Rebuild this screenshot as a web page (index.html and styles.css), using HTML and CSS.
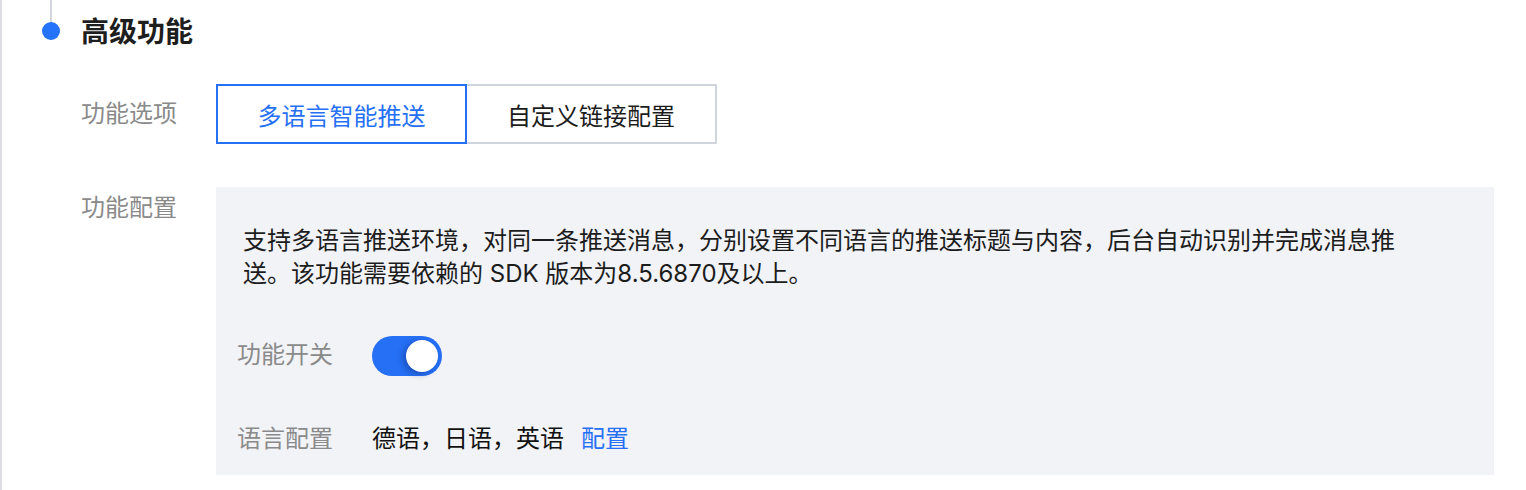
FILE: index.html
```html
<!DOCTYPE html>
<html lang="zh-CN">
<head>
<meta charset="utf-8">
<title>高级功能</title>
<link rel="stylesheet" href="styles.css">
</head>
<body>
<div class="page">
  <div class="section-head">
    <span class="marker"></span>
    <h2 class="section-title">高级功能</h2>
  </div>

  <div class="form-row row-options">
    <div class="form-label">功能选项</div>
    <div class="tabs">
      <button class="tab tab-active">多语言智能推送</button>
      <button class="tab">自定义链接配置</button>
    </div>
  </div>

  <div class="form-row row-config">
    <div class="form-label label-top">功能配置</div>
    <div class="panel">
      <p class="panel-desc">支持多语言推送环境，对同一条推送消息，分别设置不同语言的推送标题与内容，后台自动识别并完成消息推送。该功能需要依赖的 SDK 版本为8.5.6870及以上。</p>
      <div class="panel-row row-switch">
        <div class="panel-label">功能开关</div>
        <div class="switch switch-on"><span class="switch-knob"></span></div>
      </div>
      <div class="panel-row row-lang">
        <div class="panel-label">语言配置</div>
        <div class="panel-value">德语，日语，英语<a class="link" href="#">配置</a></div>
      </div>
    </div>
  </div>
</div>
</body>
</html>
```

FILE: styles.css
```css
* { box-sizing: border-box; }

html, body {
  margin: 0;
  padding: 0;
  background: #ffffff;
}

body {
  font-family: "Inter", "Noto Sans CJK SC", "Noto Sans", sans-serif;
  color: #1c1c1c;
  font-size: 24px;
}

.page {
  border-left: 2px solid #dcdde3;
  min-height: 490px;
  width: 1526px;
}

.section-head {
  display: flex;
  align-items: center;
  height: 64px;
  padding-left: 40px;
}

.marker {
  position: relative;
  width: 18px;
  height: 18px;
  border-radius: 50%;
  background: #2673fb;
  flex: none;
  margin-top: -2px;
}

.marker::before {
  content: "";
  position: absolute;
  left: 8px;
  bottom: 18px;
  width: 2px;
  height: 24px;
  background: #d4d6de;
}

.section-title {
  margin: 0 0 0 21px;
  font-size: 28px;
  font-weight: 700;
  color: #1e1e1e;
  line-height: 36px;
}

.form-row {
  display: flex;
  padding-left: 79px;
}

.row-options {
  margin-top: 20px;
  align-items: center;
}

.row-config {
  margin-top: 43px;
  align-items: flex-start;
}

.form-label {
  width: 135px;
  flex: none;
  color: #8a8a8a;
  font-size: 24px;
  line-height: 42px;
}

.label-top {
  margin-top: 0;
}

.tabs {
  display: flex;
}

.tab {
  font-family: inherit;
  font-size: 24px;
  width: 251px;
  height: 60px;
  background: #ffffff;
  border: 2px solid #cfd4dd;
  color: #1c1c1c;
  padding: 0;
  margin: 0;
  cursor: pointer;
}

.tab + .tab {
  border-left: none;
  width: 250px;
}

.tab-active {
  border-color: #2670f5;
  color: #2670f5;
}

.panel {
  width: 1278px;
  background: #f2f3f7;
  padding: 37px 21px 16px 21px;
}

.panel-desc {
  margin: 0;
  padding-left: 6px;
  max-width: 1166px;
  font-size: 24px;
  line-height: 33px;
  color: #1c1c1c;
}

.panel-row {
  display: flex;
  align-items: center;
  height: 40px;
}

.row-switch {
  margin-top: 46px;
}

.row-lang {
  margin-top: 43px;
}

.panel-label {
  width: 135px;
  flex: none;
  color: #8a8a8a;
  font-size: 24px;
  line-height: 36px;
}

.row-switch .panel-label {
  margin-top: -2px;
}

.panel-value {
  color: #111111;
  font-size: 24px;
  line-height: 36px;
}

.link {
  color: #2670f5;
  text-decoration: none;
  margin-left: 17px;
}

.switch {
  position: relative;
  width: 70px;
  height: 40px;
  border-radius: 20px;
  background: #2670f5;
}

.switch-knob {
  position: absolute;
  top: 4px;
  right: 4px;
  width: 32px;
  height: 32px;
  border-radius: 50%;
  background: #ffffff;
  box-shadow: -3px 2px 6px rgba(10, 40, 120, 0.45);
}
```
